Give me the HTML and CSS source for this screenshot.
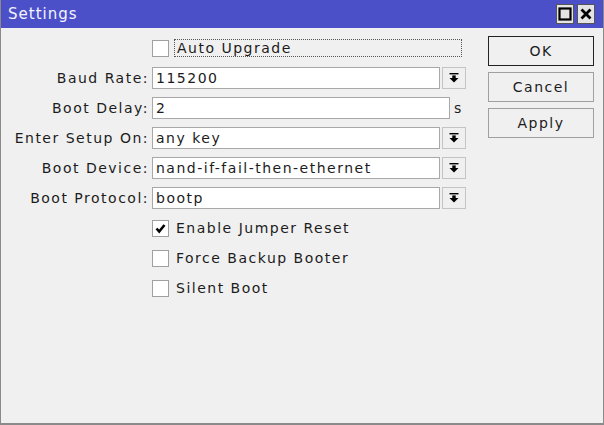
FILE: index.html
```html
<!DOCTYPE html>
<html lang="en">
<head>
    <meta charset="UTF-8">
    <meta name="viewport" content="width=device-width, initial-scale=1.0">
    <title>Settings</title>
    <link rel="stylesheet" href="styles.css">
</head>
<body>
    <div class="window">
        <div class="titlebar">
            <span class="title">Settings</span>
            <div class="tbtns">
                <div class="tbtn">
                    <svg width="14" height="14" viewBox="0 0 14 14"><rect x="1.5" y="1.5" width="11" height="11" fill="none" stroke="#000" stroke-width="2.2"/></svg>
                </div>
                <div class="tbtn">
                    <svg width="14" height="14" viewBox="0 0 14 14"><path d="M2.5 2.5 L11.5 11.5 M11.5 2.5 L2.5 11.5" stroke="#000" stroke-width="2.8"/></svg>
                </div>
            </div>
        </div>
        <div class="content">
            <div class="form">
                <div class="row">
                    <span class="label"></span>
                    <span class="check"></span>
                    <span class="clabel focus">Auto Upgrade</span>
                </div>
                <div class="row">
                    <span class="label">Baud Rate:</span>
                    <span class="input">115200</span>
                    <span class="drop">
                        <svg width="10" height="10" viewBox="0 0 10 10"><rect x="0.5" y="0" width="9" height="1.4" fill="#000"/><rect x="3.3" y="2.4" width="3.4" height="3" fill="#000"/><polygon points="0.5,5 9.5,5 5,9.6" fill="#000"/></svg>
                    </span>
                </div>
                <div class="row">
                    <span class="label">Boot Delay:</span>
                    <span class="input wide">2</span>
                    <span class="unit">s</span>
                </div>
                <div class="row">
                    <span class="label">Enter Setup On:</span>
                    <span class="input">any key</span>
                    <span class="drop">
                        <svg width="10" height="10" viewBox="0 0 10 10"><rect x="0.5" y="0" width="9" height="1.4" fill="#000"/><rect x="3.3" y="2.4" width="3.4" height="3" fill="#000"/><polygon points="0.5,5 9.5,5 5,9.6" fill="#000"/></svg>
                    </span>
                </div>
                <div class="row">
                    <span class="label">Boot Device:</span>
                    <span class="input">nand-if-fail-then-ethernet</span>
                    <span class="drop">
                        <svg width="10" height="10" viewBox="0 0 10 10"><rect x="0.5" y="0" width="9" height="1.4" fill="#000"/><rect x="3.3" y="2.4" width="3.4" height="3" fill="#000"/><polygon points="0.5,5 9.5,5 5,9.6" fill="#000"/></svg>
                    </span>
                </div>
                <div class="row">
                    <span class="label">Boot Protocol:</span>
                    <span class="input">bootp</span>
                    <span class="drop">
                        <svg width="10" height="10" viewBox="0 0 10 10"><rect x="0.5" y="0" width="9" height="1.4" fill="#000"/><rect x="3.3" y="2.4" width="3.4" height="3" fill="#000"/><polygon points="0.5,5 9.5,5 5,9.6" fill="#000"/></svg>
                    </span>
                </div>
                <div class="row">
                    <span class="label"></span>
                    <span class="check">
                        <svg width="13" height="13" viewBox="0 0 13 13"><path d="M2.5 6.5 L5.2 9.5 L10.5 3" fill="none" stroke="#000" stroke-width="2.6"/></svg>
                    </span>
                    <span class="clabel">Enable Jumper Reset</span>
                </div>
                <div class="row">
                    <span class="label"></span>
                    <span class="check"></span>
                    <span class="clabel">Force Backup Booter</span>
                </div>
                <div class="row">
                    <span class="label"></span>
                    <span class="check"></span>
                    <span class="clabel">Silent Boot</span>
                </div>
            </div>
            <div class="buttons">
                <div class="btn default">OK</div>
                <div class="btn">Cancel</div>
                <div class="btn">Apply</div>
            </div>
        </div>
    </div>
</body>
</html>
```

FILE: styles.css
```css
body {
    margin: 0;
    font-family: "DejaVu Sans", sans-serif;
    font-size: 14px;
    letter-spacing: 1.5px;
    color: #1c1c1c;
}
.window {
    width: 604px;
    height: 425px;
    box-sizing: border-box;
    background: #f0f0f0;
    border: 1px solid #8a8a8a;
    border-top: none;
    border-bottom: 2px solid #8a8a8a;
}
.titlebar {
    height: 28px;
    background: #4b50c9;
    display: flex;
    align-items: center;
    justify-content: space-between;
    padding-left: 7px;
    padding-right: 8px;
}
.title {
    color: #f4f4ff;
    font-size: 15px;
    letter-spacing: 1px;
}
.tbtns {
    display: flex;
    gap: 3px;
}
.tbtn {
    width: 18px;
    height: 20px;
    box-sizing: border-box;
    background: #e4e4e4;
    border: 1px solid #555;
    display: flex;
    align-items: center;
    justify-content: center;
}
.content {
    display: flex;
    justify-content: space-between;
}
.form {
    padding-top: 5px;
}
.row {
    height: 30px;
    display: flex;
    align-items: center;
}
.label {
    width: 148px;
    text-align: right;
    margin-right: 3px;
}
.input {
    width: 288px;
    height: 22px;
    box-sizing: border-box;
    background: #fff;
    border: 1px solid #a8a8a8;
    padding-left: 3px;
    line-height: 20px;
    white-space: nowrap;
    overflow: hidden;
}
.input.wide {
    width: 298px;
}
.drop {
    width: 24px;
    height: 22px;
    box-sizing: border-box;
    margin-left: 2px;
    border: 1px solid #c4c4c4;
    display: flex;
    align-items: center;
    justify-content: center;
}
.unit {
    margin-left: 4px;
}
.check {
    width: 17px;
    height: 17px;
    box-sizing: border-box;
    background: #fff;
    border: 1px solid #a0a0a0;
    display: flex;
    align-items: center;
    justify-content: center;
}
.clabel {
    margin-left: 5px;
    padding: 0 2px;
    line-height: 16px;
}
.focus {
    width: 282px;
    border: 1px dotted #555;
}
.buttons {
    display: flex;
    flex-direction: column;
    gap: 6px;
    margin-top: 8px;
    margin-right: 9px;
}
.btn {
    width: 106px;
    height: 30px;
    box-sizing: border-box;
    border: 1px solid #a0a0a0;
    display: flex;
    align-items: center;
    justify-content: center;
}
.btn.default {
    border: 1px solid #222;
}
```
